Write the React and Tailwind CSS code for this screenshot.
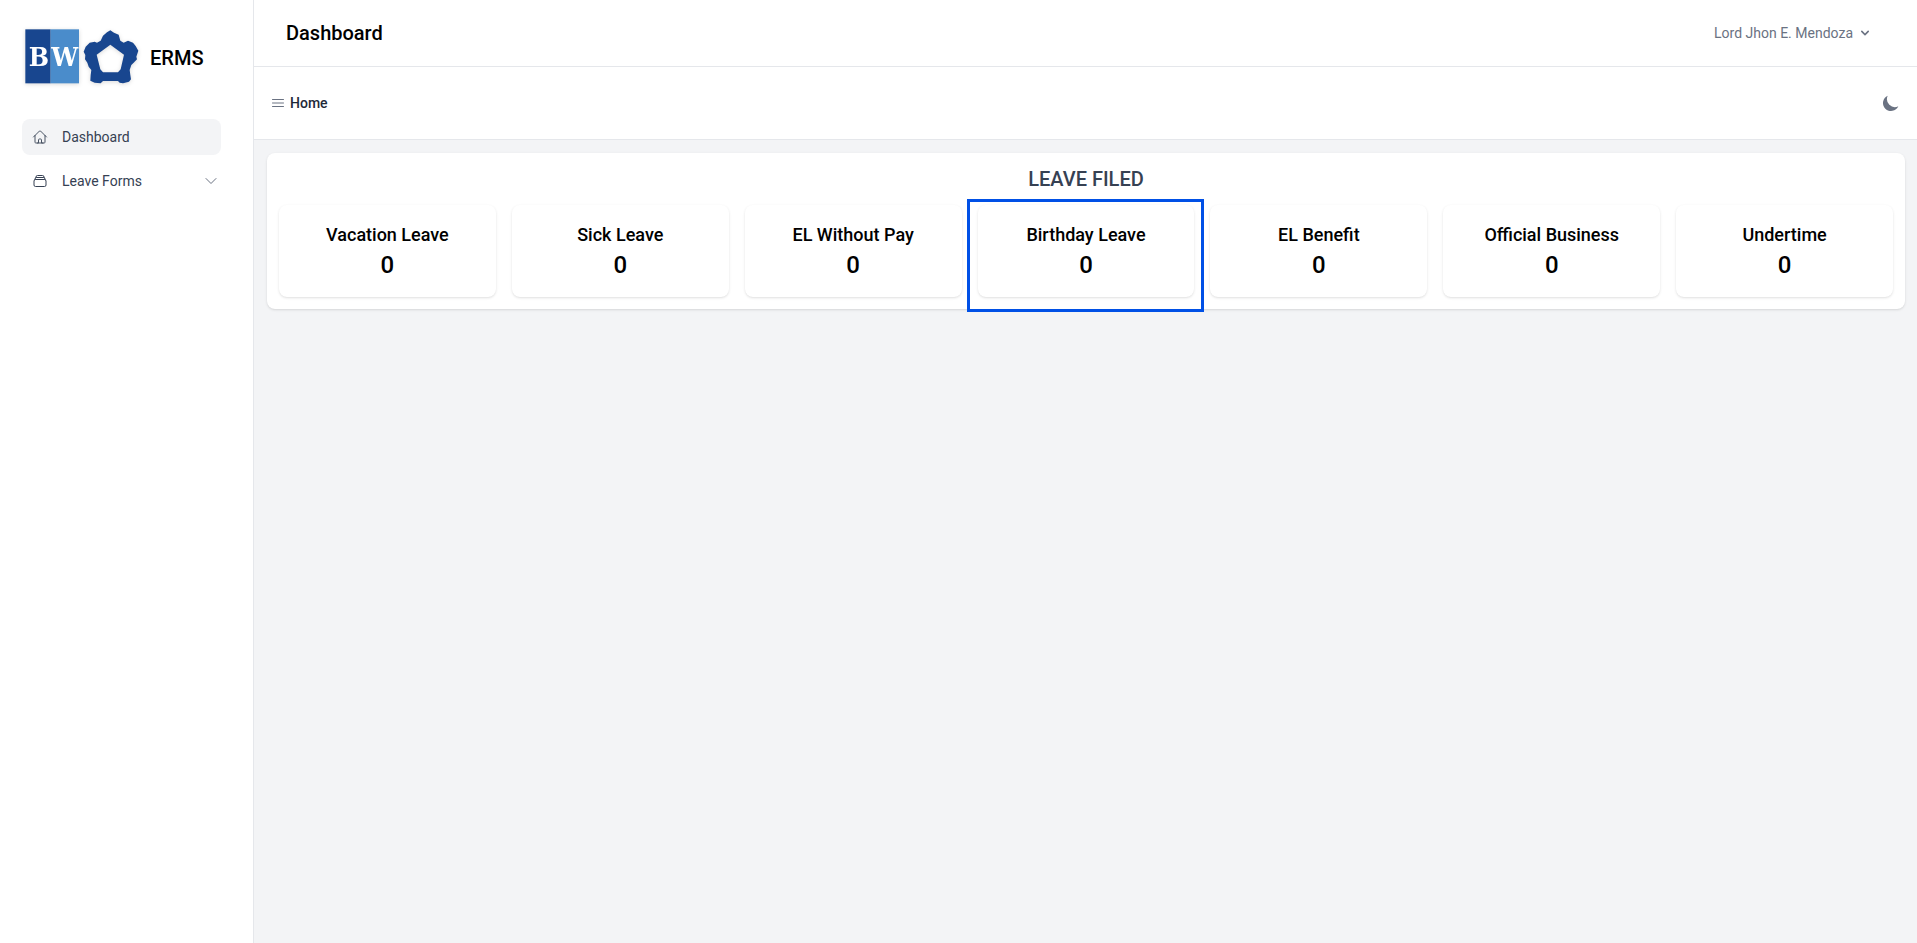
import React from "react";
import { HiMoon, HiChevronDown } from "react-icons/hi";

const leaveTypes = [
  { name: "Vacation Leave", count: 0 },
  { name: "Sick Leave", count: 0 },
  { name: "EL Without Pay", count: 0 },
  { name: "Birthday Leave", count: 0, selected: true },
  { name: "EL Benefit", count: 0 },
  { name: "Official Business", count: 0 },
  { name: "Undertime", count: 0 },
];

const App = () => {
  return (
    <div className="flex min-h-screen bg-gray-100 font-['Roboto',sans-serif] text-black">
      <Sidebar />

      <div className="flex-1 min-w-0">
        {/* --- HEADER --- */}
        <header className="flex items-center justify-between bg-white border-b border-gray-200 px-8 py-[15px]">
          <h1 className="text-xl font-medium">Dashboard</h1>
          <button type="button" className="flex items-center gap-1 px-3 py-2 text-sm text-gray-500">
            Lord Jhon E. Mendoza
            <HiChevronDown size={16} />
          </button>
        </header>

        {/* --- NAV --- */}
        <nav className="flex items-center justify-between bg-white border-b border-gray-200 px-4 py-[18px]">
          <a href="#home" className="flex items-center gap-1 py-2 text-sm font-medium text-gray-800">
            <OutlineIcon className="text-gray-500" d="M3.75 6.75h16.5M3.75 12h16.5M3.75 17.25h16.5" />
            Home
          </a>
          <button type="button" aria-label="Dark mode" className="text-gray-500">
            <HiMoon size={20} />
          </button>
        </nav>

        <main className="pt-[13px] pl-[13px] pr-3">
          <section className="bg-white rounded-lg shadow p-3">
            <h2 className="text-xl font-medium text-gray-700 text-center mb-3">LEAVE FILED</h2>
            <div className="grid grid-cols-7 gap-4">
              {leaveTypes.map((leave) => (
                <LeaveCard key={leave.name} {...leave} />
              ))}
            </div>
          </section>
        </main>
      </div>
    </div>
  );
};

/* --- SIDEBAR --- */
const Sidebar = () => (
  <aside className="w-[254px] shrink-0 bg-white border-r border-gray-200 pt-6 pl-[22px] pr-8">
    <div className="flex items-center gap-[7px] mb-7">
      <Logo />
      <span className="text-xl font-medium">ERMS</span>
    </div>
    <div className="flex flex-col gap-2 text-sm text-gray-700">
      <a href="#dashboard" className="flex items-center gap-3 rounded-lg bg-gray-100 pl-2 py-2">
        <span className="w-5 flex justify-center">
          <OutlineIcon
            className="text-gray-600"
            d="M2.25 12l8.954-8.955c.44-.439 1.152-.439 1.591 0L21.75 12M4.5 9.75v10.125c0 .621.504 1.125 1.125 1.125H9.75v-4.875c0-.621.504-1.125 1.125-1.125h2.25c.621 0 1.125.504 1.125 1.125V21h4.125c.621 0 1.125-.504 1.125-1.125V9.75M8.25 21h8.25"
          />
        </span>
        Dashboard
      </a>
      <button type="button" className="flex items-center gap-3 rounded-lg pl-2 py-2">
        <span className="w-5 flex justify-center">
          <OutlineIcon
            className="text-gray-700"
            d="M6 6.878V6a2.25 2.25 0 012.25-2.25h7.5A2.25 2.25 0 0118 6v.878m-12 0c.235-.083.487-.128.75-.128h10.5c.263 0 .515.045.75.128m-12 0A2.25 2.25 0 004.5 9v.878m13.5-3A2.25 2.25 0 0119.5 9v.878m0 0a2.246 2.246 0 00-.75-.128H5.25c-.263 0-.515.045-.75.128m15 0A2.25 2.25 0 0121 12v6a2.25 2.25 0 01-2.25 2.25H5.25A2.25 2.25 0 013 18v-6c0-.98.626-1.813 1.5-2.122"
          />
        </span>
        Leave Forms
        <span className="ml-auto w-5 flex justify-center">
          <OutlineIcon className="text-gray-500" d="M19.5 8.25l-7.5 7.5-7.5-7.5" />
        </span>
      </button>
    </div>
  </aside>
);

/* --- LEAVE CARD --- */
const LeaveCard = ({ name, count, selected }) => (
  <div className="relative rounded-lg bg-white shadow-sm p-4 text-center font-medium">
    <p className="text-lg leading-7">{name}</p>
    <p className="text-2xl leading-8">{count}</p>
    {selected && (
      <div className="absolute z-10 -top-[6px] -bottom-[15px] -left-[11px] -right-[10px] border-3 border-[#0050e6]" />
    )}
  </div>
);

const OutlineIcon = ({ className, d }) => (
  <svg
    className={className}
    width="16"
    height="16"
    viewBox="0 0 24 24"
    fill="none"
    stroke="currentColor"
    strokeWidth="1.5"
    strokeLinecap="round"
    strokeLinejoin="round"
    aria-hidden="true"
  >
    <path d={d} />
  </svg>
);

const Logo = () => (
  <svg className="w-[121px] h-[67px] shrink-0 drop-shadow-sm" viewBox="7 2 363 201" role="img" aria-label="BW logo">
    <rect x="17" y="18" width="76" height="162" fill="#18468f" />
    <rect x="93" y="18" width="85" height="162" fill="#4a8ccb" />
    <g fill="#fff" fontFamily="DejaVu Serif Condensed, DejaVu Serif, serif" fontWeight="700" fontSize="80">
      <text x="27" y="128">B</text>
      <text x="95" y="128">W</text>
    </g>
    <path
      fill="#18468f"
      fillRule="evenodd"
      d="M250 37L262 27 272 21 283 28 297 34 302 52 312 58 325 52 340 58 348 68 356 82 350 100 352 108 342 118 335 125 330 140 332 155 334 168 328 175 310 180 300 178 295 173H250L243 180 225 178 212 172 213 155 215 140 207 130 203 118 196 108 197 95 192 85 198 70 210 58 225 55 232 58 243 52ZM272 64L231 94 242 138 250 147H295L303 138 313 94Z"
    />
  </svg>
);

export default App;
